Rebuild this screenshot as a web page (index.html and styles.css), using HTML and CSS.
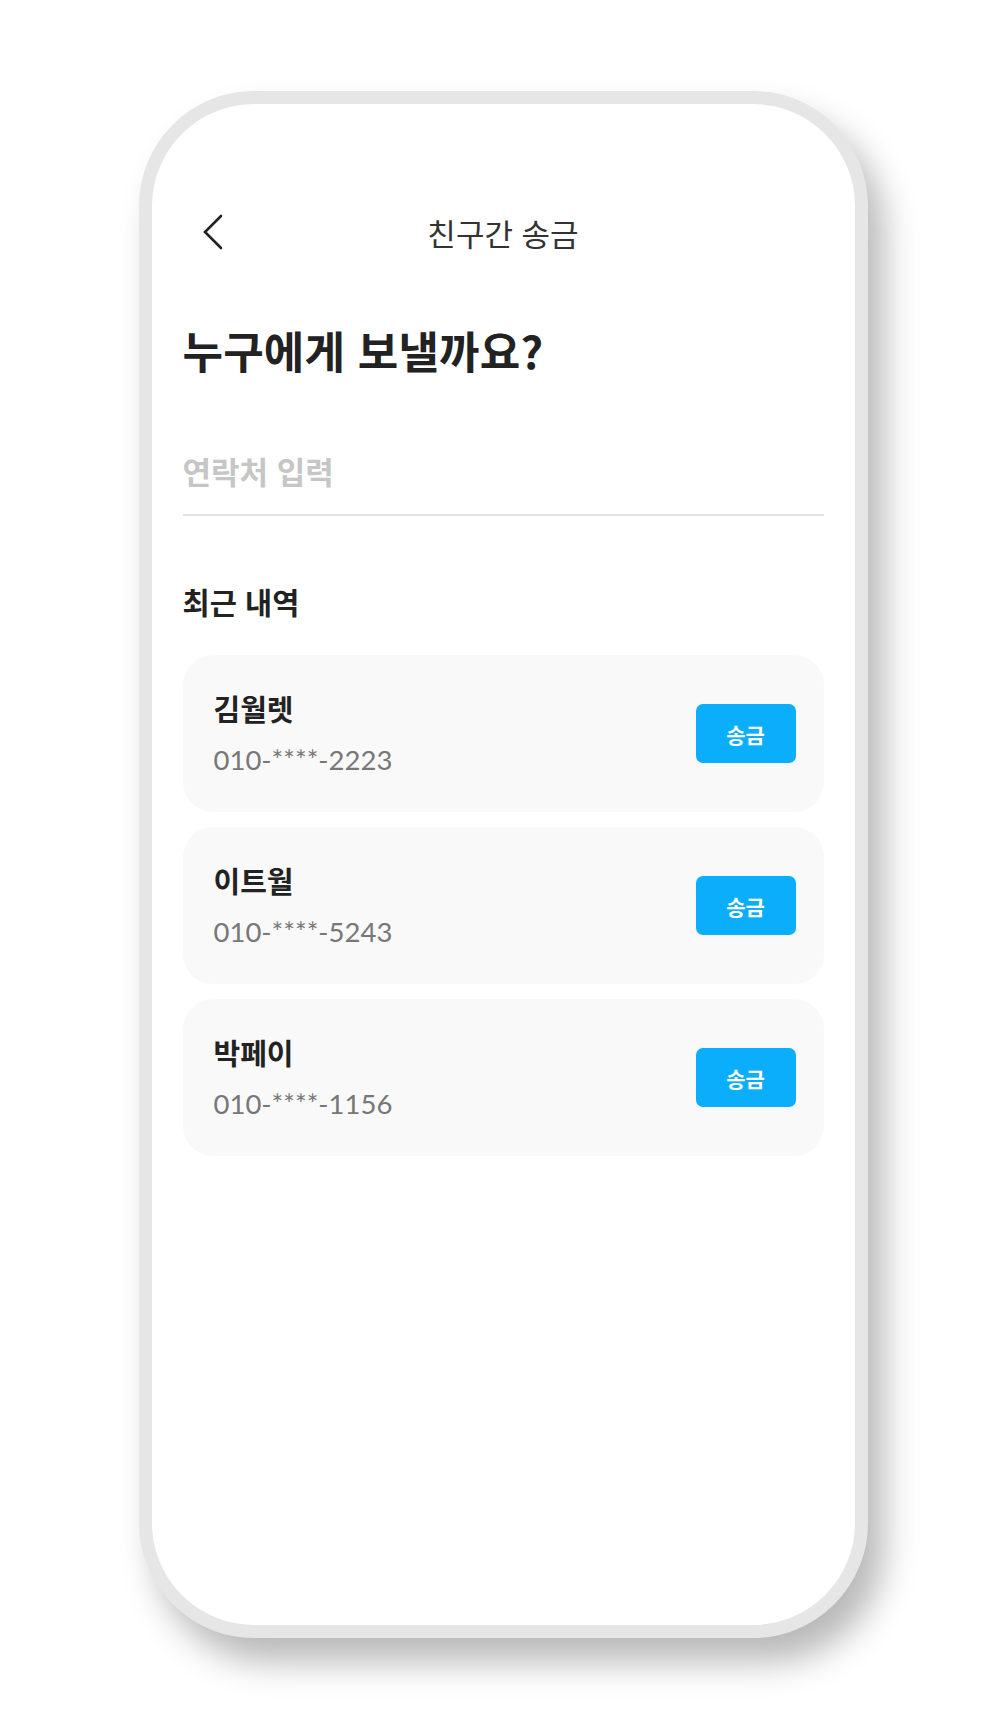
FILE: index.html
```html
<!DOCTYPE html>
<html lang="ko">
<head>
    <meta charset="UTF-8">
    <meta name="viewport" content="width=device-width, initial-scale=1.0">
    <title>친구간 송금</title>
    <link rel="stylesheet" href="styles.css">
</head>
<body>
    <div class="phone">
        <div class="screen">
            <header class="topbar">
                <button class="back" type="button" aria-label="뒤로">
                    <svg width="24" height="40" viewBox="0 0 24 40">
                        <path d="M20 4 L4 20 L20 36" fill="none" stroke="#222" stroke-width="2.6" stroke-linecap="round" stroke-linejoin="miter"/>
                    </svg>
                </button>
                <h2 class="topbar-title">친구간 송금</h2>
                <span></span>
            </header>

            <h1 class="headline">누구에게 보낼까요?</h1>

            <input class="contact-input" type="text" placeholder="연락처 입력">

            <h3 class="section-title">최근 내역</h3>

            <ul class="recent-list">
                <li class="recent-item">
                    <div class="person">
                        <p class="person-name">김월렛</p>
                        <p class="person-phone">010-****-2223</p>
                    </div>
                    <button class="send-btn" type="button">송금</button>
                </li>
                <li class="recent-item">
                    <div class="person">
                        <p class="person-name">이트월</p>
                        <p class="person-phone">010-****-5243</p>
                    </div>
                    <button class="send-btn" type="button">송금</button>
                </li>
                <li class="recent-item">
                    <div class="person">
                        <p class="person-name">박페이</p>
                        <p class="person-phone">010-****-1156</p>
                    </div>
                    <button class="send-btn" type="button">송금</button>
                </li>
            </ul>
        </div>
    </div>
</body>
</html>
```

FILE: styles.css
```css
body {
    margin: 0;
    padding: 91px 0 92px;
    background-color: #fff;
    font-family: "Noto Sans CJK KR", "Noto Sans", sans-serif;
    color: #222;
}

/* moldura do celular */
.phone {
    box-sizing: border-box;
    width: 729px;
    height: 1547px;
    margin: 0 auto;
    border: 13px solid #e6e6e6;
    border-radius: 115px;
    background-color: #fff;
    box-shadow: 16px 24px 34px rgba(0, 0, 0, 0.28);
    overflow: hidden;
}

.screen {
    padding: 98px 31px 0;
}

.topbar {
    display: grid;
    grid-template-columns: 1fr auto 1fr;
    align-items: center;
    height: 60px;
}

.back {
    display: flex;
    align-items: center;
    width: 40px;
    height: 40px;
    margin-left: 18px;
    padding: 0;
    border: none;
    background: none;
    cursor: pointer;
}

.topbar-title {
    margin: 0;
    font-size: 31px;
    font-weight: 400;
    color: #333;
}

.headline {
    margin: 60px 0 0;
    font-size: 44px;
    line-height: 56px;
    font-weight: 700;
    letter-spacing: 0.2px;
    color: #222;
}

.contact-input {
    display: block;
    box-sizing: border-box;
    width: 100%;
    height: 76px;
    margin-top: 62px;
    padding: 10px 0 24px;
    border: none;
    border-bottom: 2px solid #e3e3e3;
    outline: none;
    background: none;
    font-family: inherit;
    font-size: 31px;
    font-weight: 700;
    color: #222;
}

.contact-input::placeholder {
    color: #c6c6c6;
}

.section-title {
    margin: 67px 0 0;
    font-size: 29.5px;
    line-height: 36px;
    font-weight: 700;
    color: #222;
}

.recent-list {
    list-style: none;
    margin: 36px 0 0;
    padding: 0;
    display: flex;
    flex-direction: column;
    gap: 15px;
}

.recent-item {
    display: flex;
    align-items: center;
    justify-content: space-between;
    height: 157px;
    padding: 0 28px 0 31px;
    border-radius: 30px;
    background-color: #f9f9f9;
}

.person p {
    margin: 0;
}

.person-name {
    font-size: 29px;
    line-height: 36px;
    font-weight: 700;
    color: #222;
}

.person-phone {
    margin-top: 17px !important;
    font-family: Lato, "Liberation Sans", sans-serif;
    font-size: 27.5px;
    line-height: 34px;
    color: #777;
}

.send-btn {
    width: 100px;
    height: 59px;
    border: none;
    border-radius: 7px;
    background-color: #0aaefb;
    color: #fff;
    font-family: inherit;
    font-size: 21px;
    font-weight: 700;
    cursor: pointer;
}
```
